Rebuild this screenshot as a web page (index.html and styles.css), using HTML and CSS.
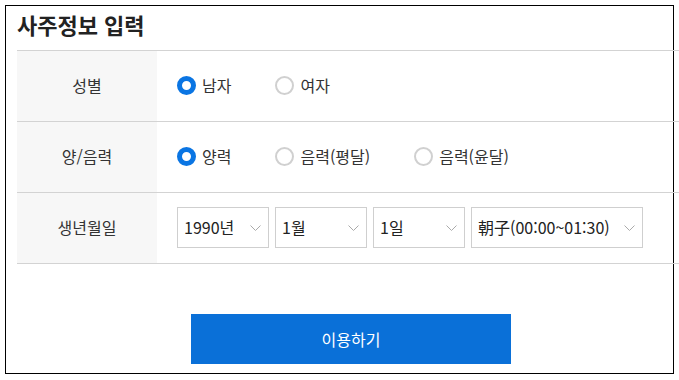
FILE: index.html
```html
<!DOCTYPE html>
<html lang="ko">
<head>
    <meta charset="UTF-8">
    <meta name="viewport" content="width=device-width, initial-scale=1.0">
    <title>사주정보 입력</title>
    <link rel="stylesheet" href="styles.css">
</head>
<body>

<div class="panel">
    <h2 class="panelTitle">사주정보 입력</h2>
    <form id="sajuForm">
        <table class="infoTable">
            <tr>
                <th>성별</th>
                <td>
                    <div class="optionRow">
                        <label class="option"><input type="radio" name="gender" value="M" checked>남자</label>
                        <label class="option"><input type="radio" name="gender" value="F">여자</label>
                    </div>
                </td>
            </tr>
            <tr>
                <th>양/음력</th>
                <td>
                    <div class="optionRow">
                        <label class="option"><input type="radio" name="calendar" value="solar" checked>양력</label>
                        <label class="option"><input type="radio" name="calendar" value="lunar">음력(평달)</label>
                        <label class="option"><input type="radio" name="calendar" value="leap">음력(윤달)</label>
                    </div>
                </td>
            </tr>
            <tr>
                <th>생년월일</th>
                <td>
                    <div class="selectRow">
                        <div class="selectBox">
                            <select name="year"><option>1990년</option></select>
                            <svg class="chevron" width="11" height="6" viewBox="0 0 11 6"><path d="M0.5 0.5 L5.5 5.5 L10.5 0.5" fill="none" stroke="#aaa" stroke-width="1"/></svg>
                        </div>
                        <div class="selectBox">
                            <select name="month"><option>1월</option></select>
                            <svg class="chevron" width="11" height="6" viewBox="0 0 11 6"><path d="M0.5 0.5 L5.5 5.5 L10.5 0.5" fill="none" stroke="#aaa" stroke-width="1"/></svg>
                        </div>
                        <div class="selectBox">
                            <select name="day"><option>1일</option></select>
                            <svg class="chevron" width="11" height="6" viewBox="0 0 11 6"><path d="M0.5 0.5 L5.5 5.5 L10.5 0.5" fill="none" stroke="#aaa" stroke-width="1"/></svg>
                        </div>
                        <div class="selectBox timeBox">
                            <select name="time"><option>朝子(00:00~01:30)</option></select>
                            <svg class="chevron" width="11" height="6" viewBox="0 0 11 6"><path d="M0.5 0.5 L5.5 5.5 L10.5 0.5" fill="none" stroke="#aaa" stroke-width="1"/></svg>
                        </div>
                    </div>
                </td>
            </tr>
        </table>
        <div class="actions">
            <button type="submit" class="submitButton">이용하기</button>
        </div>
    </form>
</div>

</body>
</html>
```

FILE: styles.css
```css
body {
    font-family: "Noto Sans CJK KR", "Noto Sans", sans-serif;
    color: #333;
    margin: 0;
    padding: 5px;
    overflow: hidden;
}
.panel {
    border: 1px solid #000;
    width: 656px;
    height: 367px;
    padding: 0 0 0 11px;
}
.panelTitle {
    margin: 0 0 8px 0;
    font-size: 22px;
    font-weight: 700;
    line-height: 36px;
    color: #222;
}
.infoTable {
    width: 662px;
    border-collapse: collapse;
    border-top: 1px solid #d3d3d3;
}
.infoTable tr {
    border-bottom: 1px solid #d3d3d3;
}
.infoTable th {
    width: 140px;
    height: 68px;
    padding: 0 0 2px 0;
    background-color: #f7f7f7;
    font-size: 16px;
    font-weight: 400;
    text-align: center;
    color: #333;
}
.infoTable td {
    padding: 0 0 2px 20px;
    font-size: 16px;
}
.optionRow {
    display: flex;
    align-items: center;
}
.option {
    display: flex;
    align-items: center;
    gap: 6px;
    margin-right: 44px;
    cursor: pointer;
}
.option input {
    appearance: none;
    -webkit-appearance: none;
    width: 19px;
    height: 19px;
    margin: 0;
    border: 2px solid #d0d0d0;
    border-radius: 50%;
    background: #fff;
}
.option input:checked {
    border: 5.5px solid #0a75e3;
}
.selectRow {
    display: flex;
    gap: 6px;
}
.selectBox {
    position: relative;
    width: 92px;
    height: 41px;
}
.timeBox {
    width: 172px;
}
.selectBox select {
    appearance: none;
    -webkit-appearance: none;
    width: 100%;
    height: 100%;
    border: 1px solid #cfcfcf;
    border-radius: 0;
    background: #fff;
    padding: 0 0 0 6px;
    font-family: "Noto Sans CJK KR", "Noto Sans", sans-serif;
    font-size: 16px;
    color: #222;
}
.chevron {
    position: absolute;
    right: 8px;
    top: 18px;
    pointer-events: none;
}
.actions {
    width: 668px;
    display: flex;
    justify-content: center;
    margin-top: 50px;
}
.submitButton {
    width: 320px;
    height: 50px;
    border: none;
    background-color: #0a70d8;
    color: #fff;
    font-family: "Noto Sans CJK KR", "Noto Sans", sans-serif;
    font-size: 16px;
    cursor: pointer;
}
```
